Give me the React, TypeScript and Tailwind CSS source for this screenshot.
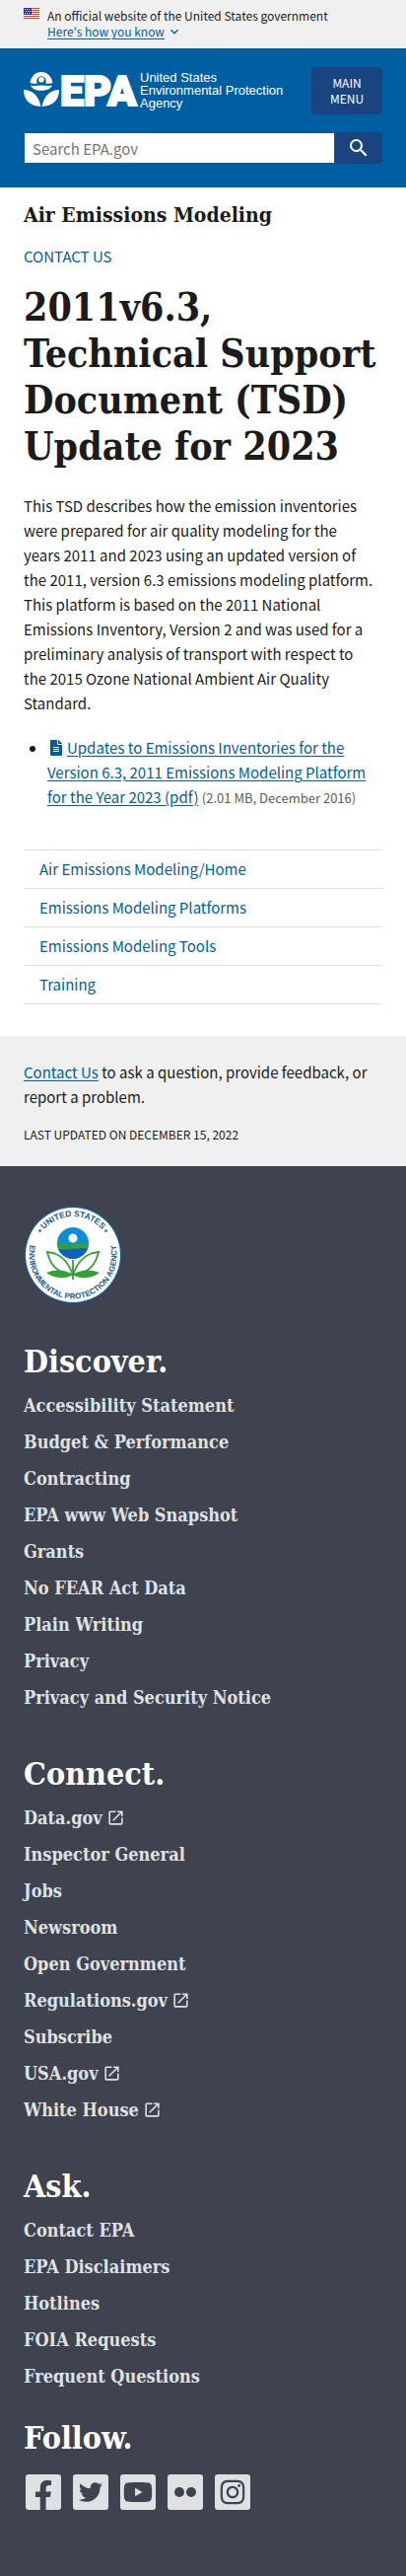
import React from "react";
import { MdExpandMore, MdOpenInNew, MdSearch } from "react-icons/md";
import { FaFacebookF, FaFileAlt, FaInstagram, FaTwitter, FaYoutube } from "react-icons/fa";

type FooterLink = { label: string; external?: boolean };

const sideLinks = [
  "Air Emissions Modeling/Home",
  "Emissions Modeling Platforms",
  "Emissions Modeling Tools",
  "Training",
];

const footerGroups: { title: string; links: FooterLink[] }[] = [
  {
    title: "Discover.",
    links: [
      { label: "Accessibility Statement" },
      { label: "Budget & Performance" },
      { label: "Contracting" },
      { label: "EPA www Web Snapshot" },
      { label: "Grants" },
      { label: "No FEAR Act Data" },
      { label: "Plain Writing" },
      { label: "Privacy" },
      { label: "Privacy and Security Notice" },
    ],
  },
  {
    title: "Connect.",
    links: [
      { label: "Data.gov", external: true },
      { label: "Inspector General" },
      { label: "Jobs" },
      { label: "Newsroom" },
      { label: "Open Government" },
      { label: "Regulations.gov", external: true },
      { label: "Subscribe" },
      { label: "USA.gov", external: true },
      { label: "White House", external: true },
    ],
  },
  {
    title: "Ask.",
    links: [
      { label: "Contact EPA" },
      { label: "EPA Disclaimers" },
      { label: "Hotlines" },
      { label: "FOIA Requests" },
      { label: "Frequent Questions" },
    ],
  },
];

const stripes = [0, 2, 4, 6, 8, 10];

function Flag() {
  return (
    <svg viewBox="0 0 16 11" className="h-[11px] w-4 shrink-0" aria-hidden="true">
      <rect width="16" height="11" fill="#fff" />
      {stripes.map((y) => (
        <rect key={y} y={y} width="16" height="1" fill="#db3e1f" />
      ))}
      <rect width="8" height="7" fill="#1e33b1" />
      {[1, 3, 5].map((y) =>
        [1, 3, 5].map((x) => <rect key={`${x}-${y}`} x={x + (y === 3 ? 1 : 0)} y={y} width="1" height="1" fill="#fff" />)
      )}
    </svg>
  );
}

function EpaLogo() {
  return (
    <svg viewBox="0 0 114 37" className="h-[37px] w-[114px] shrink-0 overflow-visible" role="img" aria-label="EPA">
      <g fill="#fff">
        <path
          fillRule="evenodd"
          d="M6.500 12C7.500 5.500 12 1 18 1s10.500 4.500 11.500 11c-2 .8-4.500 1-7.300.4a4.800 4.800 0 1 0-8.400 0C11 13 8.500 12.800 6.500 12Z"
        />
        <circle cx="18" cy="8.800" r="2.800" />
        <path d="M7 14.500c3.600 1 7 .2 11 0s7.500 1 11 0c-1.600 3.500-5.500 5.300-11 5.300S8.500 18 7 14.500Z" />
        <path d="M0 19c8 0 15 5 17.500 17C7 35.500 0 30 0 19Z" />
        <path d="M36 19c-8 0-15 5-17.500 17C29 35.500 36 30 36 19Z" />
      </g>
      <text
        x="37"
        y="35"
        fill="#fff"
        stroke="#fff"
        strokeWidth="2"
        fontFamily="Roboto,'Liberation Sans',sans-serif"
        fontWeight="900"
        fontSize="43"
      >
        EPA
      </text>
    </svg>
  );
}

function Seal() {
  return (
    <svg viewBox="0 0 100 100" className="h-[100px] w-[100px]" role="img" aria-label="United States Environmental Protection Agency seal">
      <defs>
        <path id="seal-top" d="M11 50a39 39 0 0 1 78 0" />
        <path id="seal-bottom" d="M18.500 18.500A44.500 44.500 0 1 0 81.500 18.500" />
        <clipPath id="seal-sphere">
          <circle cx="50" cy="38" r="16" />
        </clipPath>
      </defs>
      <circle cx="50" cy="50" r="49.500" fill="#16588f" />
      <circle cx="50" cy="50" r="48" fill="#fff" />
      <g fill="#1a5a96" fontFamily="'Liberation Sans',sans-serif" fontWeight="700" fontSize="8">
        <text textAnchor="middle" fontSize="8.500">
          <textPath href="#seal-top" startOffset="50%">UNITED STATES</textPath>
        </text>
        <text textAnchor="middle">
          <textPath href="#seal-bottom" startOffset="50%">ENVIRONMENTAL PROTECTION AGENCY</textPath>
        </text>
        <circle cx="16.500" cy="25.500" r="1.300" />
        <circle cx="83.500" cy="25.500" r="1.300" />
      </g>
      <g clipPath="url(#seal-sphere)">
        <rect x="30" y="20" width="40" height="40" fill="#0a8fd6" />
        <path d="M30 38c7-1 12 2 20 1s13-1 20 0v8H30Z" fill="#35a035" />
        <path d="M30 44c7 0 12 1 20 0s13-1 20 0v14H30Z" fill="#0d62bd" />
      </g>
      <circle cx="50" cy="33" r="4.500" fill="#fff" />
      <g fill="none" stroke="#35a035" strokeWidth="1.800">
        <path d="M50 70C45 56 37 48 24 47c3 14 11 22 26 23Z" />
        <path d="M50 70c5-14 13-22 26-23-3 14-11 22-26 23Z" />
        <path d="M50 55v20" />
      </g>
      <path d="M50 70c-7-5-17-6-27-2 8 6 19 7 27 2Z" fill="#35a035" />
      <path d="M50 70c7-5 17-6 27-2-8 6-19 7-27 2Z" fill="#35a035" />
    </svg>
  );
}

function SocialTile({ name, children }: { name: string; children: React.ReactNode }) {
  return (
    <a href="#" aria-label={name}>
      <svg viewBox="0 0 36 36" className="h-9 w-9 text-[#3e434f]" aria-hidden="true">
        <rect width="36" height="36" rx="3" fill="#dfe1e2" />
        {children}
      </svg>
    </a>
  );
}

const serif = "font-['DejaVu_Serif_Condensed','DejaVu_Serif',serif] font-bold";

export default function App() {
  return (
    <div className="min-h-screen bg-white font-['Noto_Sans_CJK_SC','Noto_Sans',sans-serif] text-[15px] leading-[25px] text-[#1b1b1b]">
      <div className="flex items-start gap-2 bg-[#f0f0f0] px-6 pt-2 pb-[9px] text-xs leading-4">
        <Flag />
        <div>
          <p>An official website of the United States government</p>
          <button type="button" className="flex items-center gap-0.5 text-[#005ea2]">
            <span className="underline underline-offset-2">Here's how you know</span>
            <MdExpandMore className="size-4" />
          </button>
        </div>
      </div>

      <header className="bg-[#005ea2] px-6 pt-[19px] pb-6">
        <div className="flex items-start justify-between">
          <a href="#" className="mt-1 flex gap-1 text-white">
            <EpaLogo />
            <span className="font-['Liberation_Sans',sans-serif] text-[13px] leading-[13px]">
              United States
              <br />
              Environmental Protection
              <br />
              Agency
            </span>
          </a>
          <button type="button" className="h-12 w-[72px] shrink-0 rounded-sm bg-[#1a4480] text-xs leading-4 text-white">
            MAIN
            <br />
            MENU
          </button>
        </div>
        <form role="search" className="mt-[18px] flex h-8" onSubmit={(e) => e.preventDefault()}>
          <label htmlFor="site-search" className="sr-only">
            Search
          </label>
          <input
            id="site-search"
            type="text"
            placeholder="Search EPA.gov"
            className="min-w-0 flex-1 border border-[#005ea2] bg-white px-2 text-[15px] leading-[25px] text-[#1b1b1b] placeholder:text-[#757575]"
          />
          <button type="submit" aria-label="Search" className="flex w-12 items-center justify-center rounded-r-sm bg-[#1a4480] text-white">
            <MdSearch className="size-6" />
          </button>
        </form>
      </header>

      <main className="px-6 pt-4 pb-8">
        <h2 className={`${serif} text-[21px] leading-6`}>Air Emissions Modeling</h2>
        <p className="mt-[17px]">
          <a href="#" className="text-[#005ea2]">CONTACT US</a>
        </p>
        <h1 className={`${serif} mt-4 text-[39px] leading-[47px]`}>
          2011v6.3, Technical Support Document (TSD) Update for 2023
        </h1>
        <p className="mt-6 pr-2">
          This TSD describes how the emission inventories were prepared for air quality modeling for the years 2011
          and 2023 using an updated version of the 2011, version 6.3 emissions modeling platform. This platform is
          based on the 2011 National Emissions Inventory, Version 2 and was used for a preliminary analysis of
          transport with respect to the 2015 Ozone National Ambient Air Quality Standard.
        </p>
        <ul className="mt-5 list-disc pl-6">
          <li>
            <a href="#" className="text-[#005ea2] underline underline-offset-2">
              <FaFileAlt className="mr-1 ml-0.5 inline h-4 w-[14px] align-[-2px]" />
              Updates to Emissions Inventories for the Version 6.3, 2011 Emissions Modeling Platform for the Year 2023
              (pdf)
            </a>{" "}
            <span className="text-[13px] text-[#5c5c5c]">(2.01 MB, December 2016)</span>
          </li>
        </ul>
        <nav aria-label="Section" className="mt-10">
          <ul className="border-t border-[#dfe1e2]">
            {sideLinks.map((label) => (
              <li key={label} className="border-b border-[#dfe1e2]">
                <a href="#" className="block px-4 py-2 leading-[22px] text-[#005ea2]">{label}</a>
              </li>
            ))}
          </ul>
        </nav>
      </main>

      <section className="bg-[#f0f0f0] px-6 pt-6 pb-[22px]">
        <p>
          <a href="#" className="text-[#005ea2] underline underline-offset-2">Contact Us</a> to ask a question, provide
          feedback, or report a problem.
        </p>
        <p className="mt-4 text-xs leading-5">LAST UPDATED ON DECEMBER 15, 2022</p>
      </section>

      <footer className="bg-[#3e434f] px-6 pt-10 pb-[67px] text-[#dfe1e2]">
        <Seal />
        {footerGroups.map((group) => (
          <section key={group.title} className="mt-[42px] pb-[9px]">
            <h2 className={`${serif} text-[32px] leading-8 text-white`}>{group.title}</h2>
            <ul className="mt-[18px] flex flex-col gap-4">
              {group.links.map((link) => (
                <li key={link.label} className={`${serif} text-lg leading-[21px]`}>
                  <a href="#" className="flex items-center gap-1">
                    {link.label}
                    {link.external && <MdOpenInNew className="size-[19px]" />}
                  </a>
                </li>
              ))}
            </ul>
          </section>
        ))}
        <section className="mt-[27px]">
          <h2 className={`${serif} text-[32px] leading-8 text-white`}>Follow.</h2>
          <div className="mt-[21px] ml-0.5 flex gap-3">
            <SocialTile name="Facebook">
              <FaFacebookF x="3" y="6" size={30} />
            </SocialTile>
            <SocialTile name="Twitter">
              <FaTwitter x="6" y="6" size={24} />
            </SocialTile>
            <SocialTile name="YouTube">
              <FaYoutube x="3" y="3" size={30} />
            </SocialTile>
            <SocialTile name="Flickr">
              <circle cx="12" cy="18" r="5" fill="currentColor" />
              <circle cx="24" cy="18" r="5" fill="currentColor" />
            </SocialTile>
            <SocialTile name="Instagram">
              <FaInstagram x="4" y="4" size={28} />
            </SocialTile>
          </div>
        </section>
      </footer>
    </div>
  );
}
